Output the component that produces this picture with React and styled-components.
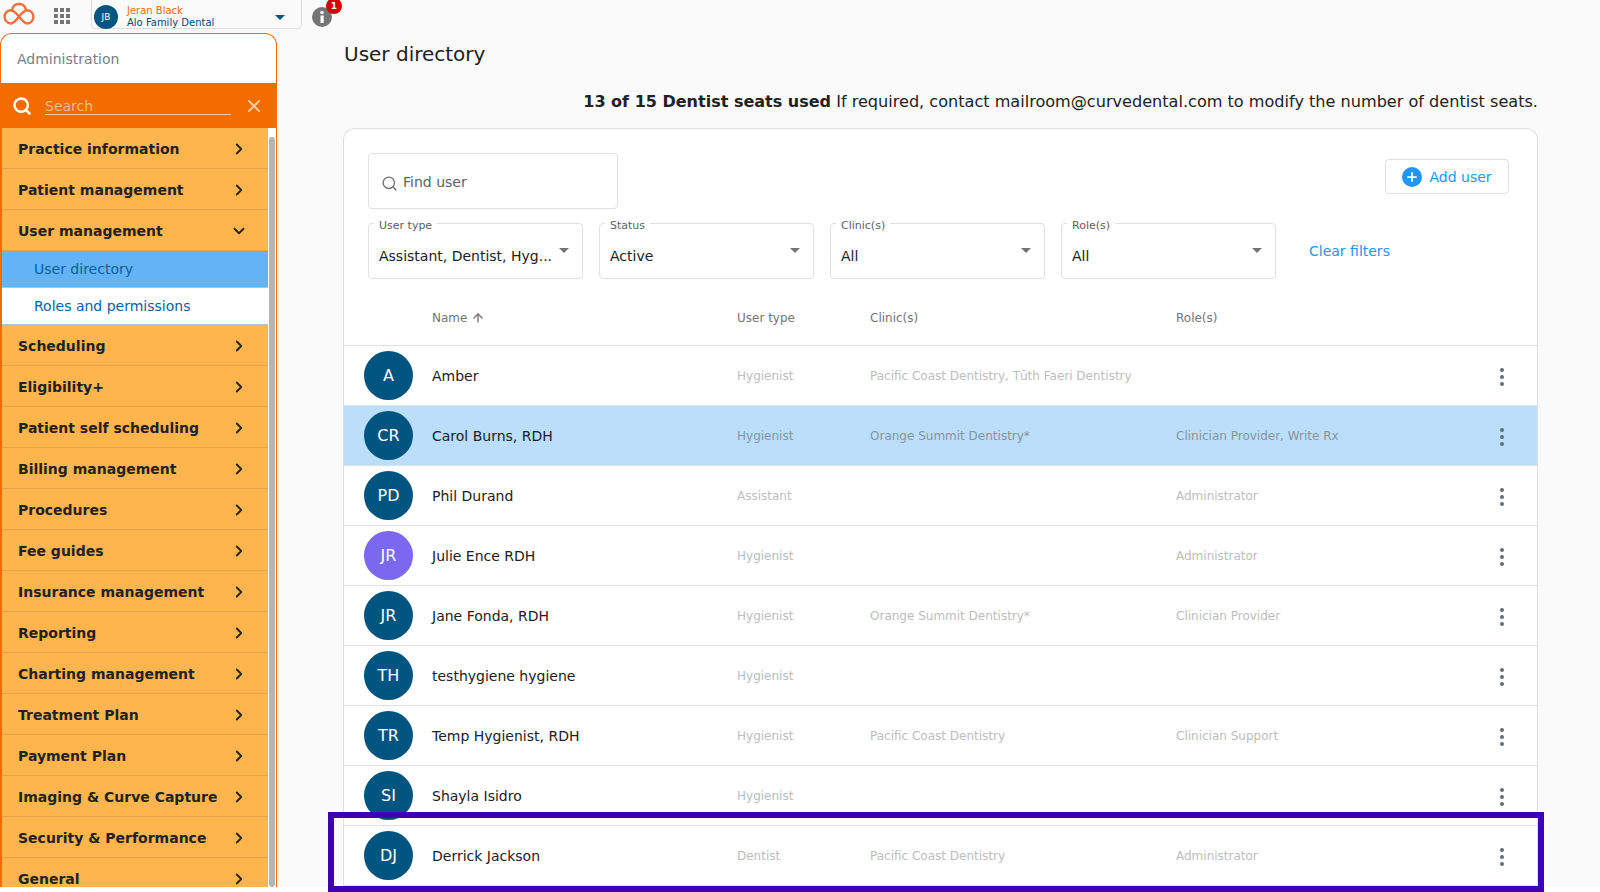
import React from "react";
import styled, { createGlobalStyle } from "styled-components";
import { ChevronRight, ChevronDown, Search, X, ArrowUp, Plus } from "lucide-react";

const menuTop = ["Practice information", "Patient management"];
const menuBottom = [
  "Scheduling",
  "Eligibility+",
  "Patient self scheduling",
  "Billing management",
  "Procedures",
  "Fee guides",
  "Insurance management",
  "Reporting",
  "Charting management",
  "Treatment Plan",
  "Payment Plan",
  "Imaging & Curve Capture",
  "Security & Performance",
  "General",
];

const users = [
  { i: "A", name: "Amber", type: "Hygienist", clinic: "Pacific Coast Dentistry, Tūth Faeri Dentistry", role: "" },
  { i: "CR", name: "Carol Burns, RDH", type: "Hygienist", clinic: "Orange Summit Dentistry*", role: "Clinician Provider, Write Rx", selected: true },
  { i: "PD", name: "Phil Durand", type: "Assistant", clinic: "", role: "Administrator" },
  { i: "JR", name: "Julie Ence RDH", type: "Hygienist", clinic: "", role: "Administrator", purple: true },
  { i: "JR", name: "Jane Fonda, RDH", type: "Hygienist", clinic: "Orange Summit Dentistry*", role: "Clinician Provider" },
  { i: "TH", name: "testhygiene hygiene", type: "Hygienist", clinic: "", role: "" },
  { i: "TR", name: "Temp Hygienist, RDH", type: "Hygienist", clinic: "Pacific Coast Dentistry", role: "Clinician Support" },
  { i: "SI", name: "Shayla Isidro", type: "Hygienist", clinic: "", role: "" },
  { i: "DJ", name: "Derrick Jackson", type: "Dentist", clinic: "Pacific Coast Dentistry", role: "Administrator" },
];

const filters = [
  { label: "User type", value: "Assistant, Dentist, Hyg..." },
  { label: "Status", value: "Active" },
  { label: "Clinic(s)", value: "All" },
  { label: "Role(s)", value: "All" },
];

const Global = createGlobalStyle`
  html, body {
    margin: 0;
    background: #fff;
    font-family: "DejaVu Sans", Verdana, sans-serif;
    overflow: hidden;
  }
`;

const Page = styled.div`
  position: relative;
  width: 1600px;
  height: 892px;
  overflow: hidden;
`;

const Screen = styled.div`
  display: flex;
  height: 887px;
  background: #fafafa;
  overflow: hidden;
`;

const LeftColumn = styled.div`
  width: 277px;
  flex: none;
  display: flex;
  flex-direction: column;
  min-height: 0;
`;

const TopBar = styled.div`
  height: 33px;
  flex: none;
  width: 350px;
  display: flex;
  align-items: flex-start;
`;

const LogoBox = styled.div`
  width: 38px;
  height: 28px;
`;

const GridBox = styled.div`
  width: 53px;
  padding: 8px 0 0 16px;
  box-sizing: border-box;
`;

const Account = styled.div`
  width: 211px;
  height: 30px;
  box-sizing: border-box;
  margin-top: -1px;
  padding: 5px 16px 0 2px;
  display: flex;
  border: 1px solid #ddd;
  border-radius: 0 0 4px 4px;
  background: #fafafa;
  align-items: flex-start;
`;

const SmallAvatar = styled.div`
  width: 24px;
  height: 24px;
  border-radius: 50%;
  background: #005580;
  color: #fff;
  font-size: 9px;
  display: flex;
  align-items: center;
  justify-content: center;
  margin-right: 9px;
`;

const AccountText = styled.div`
  flex: 1;
  font-size: 10px;
  line-height: 12px;
`;

const AccountName = styled.div`
  color: #f26c00;
`;

const AccountClinic = styled.div`
  color: #004d73;
`;

const Caret = styled.div`
  width: 0;
  height: 0;
  margin-top: 10px;
  border-left: ${(p) => p.size || 4}px solid transparent;
  border-right: ${(p) => p.size || 4}px solid transparent;
  border-top: ${(p) => p.size || 4}px solid ${(p) => p.color || "#757575"};
`;

const InfoWrap = styled.div`
  position: relative;
  margin: 7px 0 0 10px;
  width: 20px;
  height: 20px;
`;

const Badge = styled.div`
  position: absolute;
  top: -9px;
  left: 14px;
  width: 16px;
  height: 16px;
  border-radius: 50%;
  background: #d50000;
  color: #fff;
  font-size: 9px;
  font-weight: 700;
  display: flex;
  align-items: center;
  justify-content: center;
`;

const Panel = styled.div`
  flex: 1;
  min-height: 0;
  display: flex;
  flex-direction: column;
  background: #fff;
  border: 1px solid #f26c00;
  border-bottom: none;
  border-radius: 12px 12px 0 0;
  overflow: hidden;
`;

const PanelTitle = styled.div`
  height: 49px;
  flex: none;
  padding: 0 0 0 16px;
  display: flex;
  align-items: center;
  font-size: 14px;
  color: #757f87;
`;

const SearchBar = styled.div`
  height: 45px;
  flex: none;
  background: #f26c00;
  display: flex;
  align-items: center;
  padding: 0 12px 0 11px;
  color: #fff;
`;

const SearchField = styled.div`
  flex: 1;
  margin: 0 13px 0 13px;
  border-bottom: 1px solid #fbc79a;
  color: #fbb987;
  font-size: 14px;
  line-height: 18px;
  height: 17px;
`;

const NavScroll = styled.div`
  flex: 1;
  min-height: 0;
  display: flex;
  overflow: hidden;
`;

const NavList = styled.div`
  width: 267px;
  flex: none;
  border-left: 1px solid #f26c00;
  box-sizing: border-box;
`;

const NavItem = styled.div`
  height: 41px;
  box-sizing: border-box;
  padding: 2px 20px 0 16px;
  display: flex;
  align-items: center;
  justify-content: space-between;
  background: #ffb54d;
  border-bottom: 1px solid #e2a44c;
  color: #212121;
  font-size: 14px;
  font-weight: 700;
`;

const SubItem = styled.div`
  height: 37px;
  box-sizing: border-box;
  padding: 0 0 0 32px;
  display: flex;
  align-items: center;
  background: ${(p) => (p.active ? "#63b3f5" : "#fff")};
  border-bottom: 1px solid #b9c2ca;
  color: #0b5f9e;
  font-size: 14px;
`;

const ScrollTrack = styled.div`
  flex: 1;
  padding: 9px 1px 0 1px;
`;

const ScrollThumb = styled.div`
  height: 100%;
  background: #b5b5b5;
  border-radius: 3px;
`;

const Main = styled.div`
  flex: 1;
  min-width: 0;
  padding: 43px 62px 0 66px;
  color: #212121;
`;

const Title = styled.h1`
  margin: 0 0 0 1px;
  font-size: 20px;
  font-weight: 400;
  line-height: 22px;
`;

const Seats = styled.div`
  margin-top: 27px;
  height: 36px;
  text-align: right;
  font-size: 16.1px;
  line-height: 20px;
  white-space: nowrap;
`;

const SeatsStrong = styled.b`
  font-size: 16px;
`;

const Card = styled.div`
  background: #fff;
  border: 1px solid #e0e0e0;
  border-radius: 12px 12px 0 0;
  border-bottom: none;
`;

const Toolbar = styled.div`
  display: flex;
  justify-content: space-between;
  padding: 24px 28px 14px 24px;
`;

const FindBox = styled.div`
  width: 250px;
  height: 56px;
  box-sizing: border-box;
  border: 1px solid #e0e0e0;
  border-radius: 4px;
  padding: 2px 0 0 12px;
  display: flex;
  align-items: center;
  gap: 5px;
  font-size: 14px;
  color: #616161;
`;

const FindIcon = styled(Search)`
  margin-top: 3px;
`;

const AddButton = styled.div`
  margin-top: 6px;
  width: 124px;
  height: 35px;
  box-sizing: border-box;
  border: 1px solid #e0e0e0;
  border-radius: 4px;
  display: flex;
  align-items: center;
  justify-content: center;
  gap: 7px;
  font-size: 14px;
  color: #2196f3;
`;

const PlusDot = styled.div`
  width: 20px;
  height: 20px;
  border-radius: 50%;
  background: #2196f3;
  color: #fff;
  display: flex;
  align-items: center;
  justify-content: center;
`;

const FilterRow = styled.div`
  display: flex;
  align-items: center;
  gap: 16px;
  padding: 0 0 0 24px;
`;

const Filter = styled.div`
  position: relative;
  width: 215px;
  height: 56px;
  box-sizing: border-box;
  border: 1px solid #e0e0e0;
  border-radius: 4px;
  padding: 0 10px;
  display: flex;
  justify-content: space-between;
`;

const FilterLabel = styled.span`
  position: absolute;
  top: -5px;
  left: 5px;
  padding: 0 5px;
  background: #fff;
  font-size: 11px;
  line-height: 13px;
  color: #616161;
`;

const FilterValue = styled.div`
  margin-top: 23px;
  font-size: 14px;
  line-height: 18px;
  color: #212121;
`;

const FilterCaret = styled(Caret)`
  margin: 24px 3px 0 0;
  border-left-width: 5px;
  border-right-width: 5px;
  border-top-width: 5px;
`;

const ClearLink = styled.div`
  margin-left: 17px;
  font-size: 14px;
  color: #2196f3;
`;

const columns = "88px 305px 133px 306px 1fr 62px";

const HeadRow = styled.div`
  display: grid;
  grid-template-columns: ${columns};
  height: 67px;
  padding-top: 11px;
  box-sizing: border-box;
  align-items: center;
  border-bottom: 1px solid #e0e0e0;
  font-size: 12px;
  color: #757575;
`;

const HeadCell = styled.div`
  display: flex;
  align-items: center;
  gap: 4px;
`;

const Row = styled.div`
  display: grid;
  grid-template-columns: ${columns};
  height: 60px;
  box-sizing: border-box;
  align-items: center;
  border-bottom: 1px solid #e0e0e0;
  background: ${(p) => (p.selected ? "#bbdefb" : "#fff")};
`;

const Avatar = styled.div`
  width: 49px;
  height: 49px;
  margin-left: 20px;
  border-radius: 50%;
  background: ${(p) => (p.purple ? "#7b68ee" : "#005580")};
  color: #fff;
  font-size: 16px;
  display: flex;
  align-items: center;
  justify-content: center;
`;

const NameCell = styled.div`
  font-size: 14px;
  color: #212121;
`;

const GreyCell = styled.div`
  font-size: 12px;
  color: ${(p) => (p.selected ? "#87949f" : "#bdbdbd")};
  white-space: nowrap;
`;

const Dots = styled.div`
  display: flex;
  flex-direction: column;
  align-items: center;
  gap: 3px;
  width: 4px;
  margin: 2px 0 0 25px;
`;

const Dot = styled.span`
  width: 4px;
  height: 4px;
  border-radius: 50%;
  background: #616e78;
`;

const Highlight = styled.div`
  position: absolute;
  left: 328px;
  top: 812px;
  width: 1216px;
  height: 80px;
  box-sizing: border-box;
  border: 6px solid #3d00b5;
  pointer-events: none;
`;

function Logo() {
  return (
    <svg width="38" height="28" viewBox="0 0 38 28" fill="none" stroke="#f2703a" strokeWidth="2.4">
      <path d="M19 16.500C16 20 14 23.500 10.500 23.500A6.700 6.700 0 0 1 10.500 10.200C14 10.200 16 13 19 16.500C22 20 24 23.500 27.500 23.500A6.700 6.700 0 0 0 27.500 10.200C24 10.200 22 13 19 16.500" />
      <path d="M12 10.500C12.500 6.500 15 4 19 4C23 4 25.500 6.500 26 10.500" />
    </svg>
  );
}

function Apps() {
  const cells = [];
  for (let y = 0; y < 3; y++) {
    for (let x = 0; x < 3; x++) {
      cells.push(<rect key={`${x}${y}`} x={x * 6} y={y * 6} width="4" height="4" />);
    }
  }
  return (
    <svg width="16" height="16" viewBox="0 0 16 16" fill="#757575">
      {cells}
    </svg>
  );
}

function InfoIcon() {
  return (
    <svg width="20" height="20" viewBox="0 0 20 20">
      <circle cx="10" cy="10" r="10" fill="#757575" />
      <rect x="8.500" y="8.500" width="3.200" height="7.500" fill="#fff" />
      <circle cx="10" cy="5.500" r="1.800" fill="#fff" />
    </svg>
  );
}

function Item({ label, open }) {
  const Icon = open ? ChevronDown : ChevronRight;
  return (
    <NavItem>
      {label}
      <Icon size={18} strokeWidth={2.4} color="#212121" />
    </NavItem>
  );
}

export default function App() {
  return (
    <Page>
      <Global />
      <Screen>
        <LeftColumn>
          <TopBar>
            <LogoBox>
              <Logo />
            </LogoBox>
            <GridBox>
              <Apps />
            </GridBox>
            <Account>
              <SmallAvatar>JB</SmallAvatar>
              <AccountText>
                <AccountName>Jeran Black</AccountName>
                <AccountClinic>Alo Family Dental</AccountClinic>
              </AccountText>
              <Caret color="#005580" size={5} />
            </Account>
            <InfoWrap>
              <InfoIcon />
              <Badge>1</Badge>
            </InfoWrap>
          </TopBar>
          <Panel>
            <PanelTitle>Administration</PanelTitle>
            <SearchBar>
              <Search size={20} strokeWidth={3} color="#fff" />
              <SearchField>Search</SearchField>
              <X size={20} strokeWidth={2.4} color="#fbc79a" />
            </SearchBar>
            <NavScroll>
              <NavList>
                {menuTop.map((m) => (
                  <Item key={m} label={m} />
                ))}
                <Item label="User management" open />
                <SubItem active>User directory</SubItem>
                <SubItem>Roles and permissions</SubItem>
                {menuBottom.map((m) => (
                  <Item key={m} label={m} />
                ))}
              </NavList>
              <ScrollTrack>
                <ScrollThumb />
              </ScrollTrack>
            </NavScroll>
          </Panel>
        </LeftColumn>
        <Main>
          <Title>User directory</Title>
          <Seats>
            <SeatsStrong>13 of 15 Dentist seats used</SeatsStrong> If required, contact mailroom@curvedental.com to modify the number of dentist seats.
          </Seats>
          <Card>
            <Toolbar>
              <FindBox>
                <FindIcon size={17} color="#757575" />
                Find user
              </FindBox>
              <AddButton>
                <PlusDot>
                  <Plus size={14} strokeWidth={3} />
                </PlusDot>
                Add user
              </AddButton>
            </Toolbar>
            <FilterRow>
              {filters.map((f) => (
                <Filter key={f.label}>
                  <FilterLabel>{f.label}</FilterLabel>
                  <FilterValue>{f.value}</FilterValue>
                  <FilterCaret />
                </Filter>
              ))}
              <ClearLink>Clear filters</ClearLink>
            </FilterRow>
            <HeadRow>
              <span />
              <HeadCell>
                Name <ArrowUp size={14} strokeWidth={2.4} />
              </HeadCell>
              <HeadCell>User type</HeadCell>
              <HeadCell>Clinic(s)</HeadCell>
              <HeadCell>Role(s)</HeadCell>
            </HeadRow>
            {users.map((u) => (
              <Row key={u.name} selected={u.selected}>
                <Avatar purple={u.purple}>{u.i}</Avatar>
                <NameCell>{u.name}</NameCell>
                <GreyCell selected={u.selected}>{u.type}</GreyCell>
                <GreyCell selected={u.selected}>{u.clinic}</GreyCell>
                <GreyCell selected={u.selected}>{u.role}</GreyCell>
                <Dots>
                  <Dot />
                  <Dot />
                  <Dot />
                </Dots>
              </Row>
            ))}
          </Card>
        </Main>
      </Screen>
      <Highlight />
    </Page>
  );
}
